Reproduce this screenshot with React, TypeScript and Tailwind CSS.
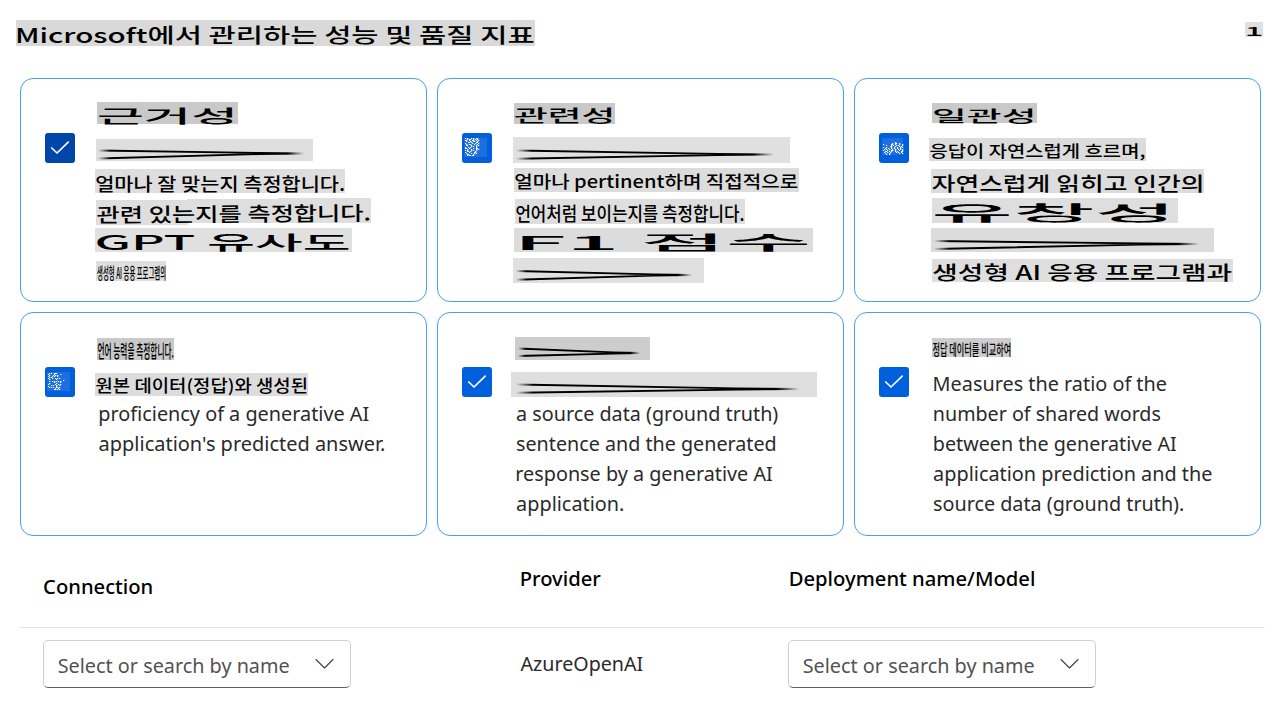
import { useLayoutEffect, useState } from "react";

const KR = '"Noto Sans CJK KR"';
const LATIN = '"Noto Sans"';

type InkProps = {
  text: string;
  x: number;
  w: number;
  /** top and bottom of the drawn glyphs; when only base is given the height is left unscaled */
  top?: number;
  bottom?: number;
  base?: number;
  size?: number;
  weight?: number;
  latin?: boolean;
  rotate?: number;
  className?: string;
};

/** One line of text whose drawn glyphs are scaled to fill a given box. */
function Ink({ text, x, w, top, bottom, base, size = 20, weight, latin, rotate = 0, className = "" }: InkProps) {
  const [transform, setTransform] = useState("none");
  const wt = weight ?? (latin ? 400 : 500);

  useLayoutEffect(() => {
    const ctx = document.createElement("canvas").getContext("2d");
    if (!ctx) return;
    // glyph bounds are rounded to whole pixels, so they are measured enlarged
    const k = 10;
    ctx.font = `${wt} ${size * k}px ${latin ? LATIN : KR}, sans-serif`;
    const m = ctx.measureText(text);
    const left = m.actualBoundingBoxLeft / k;
    const ascent = m.actualBoundingBoxAscent / k;
    const inkW = m.actualBoundingBoxRight / k + left;
    const inkH = ascent + m.actualBoundingBoxDescent / k;
    const fontA = m.fontBoundingBoxAscent / k;
    const fontH = fontA + m.fontBoundingBoxDescent / k;
    const baseline = (size - fontH) / 2 + fontA;
    const sx = w / inkW;
    const sy = top !== undefined && bottom !== undefined ? (bottom - top) / inkH : 1;
    const ty = top !== undefined ? top + 0.8 - (baseline - ascent) * sy : Math.round((base ?? 0) - baseline) + 1;
    const tx = x + (latin ? 0.5 : 0.3) + left * sx;
    setTransform(`translate(${tx}px, ${ty}px) rotate(${rotate}deg) scale(${sx}, ${sy})`);
  }, [text, x, w, top, bottom, base, size, wt, latin, rotate]);

  return (
    <span
      className={`block w-max origin-top-left leading-none whitespace-pre ${
        latin ? "font-['Noto_Sans',sans-serif]" : "font-['Noto_Sans_CJK_KR',sans-serif] text-black"
      } ${className}`}
      style={{ transform, fontSize: size, fontWeight: wt }}
    >
      {text}
    </span>
  );
}

function Mark({ box, ...ink }: InkProps & { box: string }) {
  return (
    <div className="flex h-[30px]">
      <div className={`shrink-0 ${box}`}>
        <Ink {...ink} />
      </div>
    </div>
  );
}

function Stroke({ id, box, w, h, x0, x1, y0, y1, yc }: { id: string; box: string; w: number; h: number; x0: number; x1: number; y0: number; y1: number; yc: number }) {
  const mid = x0 + (x1 - x0) * 0.78;
  return (
    <div className="flex h-[30px]">
      <div className={`shrink-0 ${box}`}>
        <svg width={w} height={h} viewBox={`0 0 ${w} ${h}`} className="block" fill="none">
          <defs>
            <linearGradient id={id} gradientUnits="userSpaceOnUse" x1={x0} y1="0" x2={x1} y2="0">
              <stop offset="0" stopOpacity="0" />
              <stop offset="0.06" stopOpacity="1" />
              <stop offset="0.92" stopOpacity="1" />
              <stop offset="1" stopOpacity="0" />
            </linearGradient>
          </defs>
          <path
            d={`M${x0} ${y0} L${mid} ${yc - 0.6} L${x1} ${yc} M${x0} ${y1} L${mid} ${yc + 0.6} L${x1} ${yc}`}
            stroke={`url(#${id})`}
            strokeWidth="1.9"
          />
        </svg>
      </div>
    </div>
  );
}

function Line({ text, w, x = 5.5 }: { text: string; w: number; x?: number }) {
  return (
    <div className="h-[30px]">
      <Ink latin text={text} x={x} w={w} base={22} className="text-[#2a2a2a]" />
    </div>
  );
}

const NOISE_A = [
  "#.#...#.#..##...",
  "..#.##..#.#.#...",
  "##..#..##..#.#..",
  ".#...#..##..#...",
  "...##.#....##...",
  "#......#..#..#..",
  ".#..##...#..#...",
  ".##...#....#.#..",
  "......#.#..#....",
  "#..#.#.....#....",
  "##..#...#..##...",
  "..#...#....#.#..",
  "#.#...#.#..#....",
  "..##.#....#.....",
  "#...#....##.....",
  ".#....#..#.#....",
  "..##....#.......",
  "..#.##.##.......",
];
const NOISE_B = [
  "............#.........",
  ".........#..##..#.....",
  "#.......##..#...#..#..",
  "...#....#.#..#.#...#..",
  ".......##...#...#.#...",
  "#..#....#..#..#..#.#..",
  "..#..#..#..#..#..#....",
  ".#.#..#..#..#..#.#.#..",
  "#...#...##..#...#..#..",
  "..##..#.#...#.#...##..",
  ".#..#..#.....#.#..#...",
  "..#...#.........#..#..",
  "...#..#...............",
];
const NOISE_C = [
  ".#.#..###.......",
  "#.....#.....#...",
  ".#...#.#.#......",
  "#...#.#..#......",
  ".#.#............",
  "#...#..#.#.#....",
  ".#......#.......",
  "...............#",
  ".#..#.#.#.#.#...",
  "......#.....#...",
  ".#......#.......",
  "#......#..#.#...",
  "...#.#..#..#....",
  "#.......#.......",
  ".#.#.#..##.#....",
  ".......#..#.....",
  "......##.#.#....",
];

function Box({ noise, dark }: { noise?: { rows: string[]; x: number; y: number; rx: number; ry: number; rw: number; rh: number }; dark?: boolean }) {
  return (
    <div className={`mt-[54px] ml-6 size-[30px] shrink-0 rounded-[3px] ${dark ? "bg-[#0046a8]" : "bg-[#005fdb]"}`}>
      <svg width="30" height="30" viewBox="0 0 30 30" fill="none" className="block">
        {noise ? (
          <>
            <rect x={noise.rx} y={noise.ry} width={noise.rw} height={noise.rh} fill="#1d6fe0" />
            {noise.rows.flatMap((r, j) =>
              r.split("").map((c, i) =>
                c === "#" ? <rect key={`${i}-${j}`} x={noise.x + i} y={noise.y + j} width="1.3" height="1" fill="#fff" fillOpacity="0.95" /> : null,
              ),
            )}
          </>
        ) : (
          <path d="M6.7 15 L12 20 L23.2 9.2" stroke="#fff" strokeWidth="1.7" strokeLinecap="round" strokeLinejoin="round" />
        )}
      </svg>
    </div>
  );
}

function Card({ box, title, children }: { box: React.ReactNode; title: React.ReactNode; children: React.ReactNode }) {
  return (
    <section className="flex h-[224px] w-[407px] rounded-[13px] border border-[#479ef5] bg-white">
      {box}
      <div className="ml-[19px] w-[320px] pt-[19px]">
        <div className="h-[37px]">{title}</div>
        {children}
      </div>
    </section>
  );
}

function Select({ textX }: { textX: number }) {
  return (
    <div role="combobox" className="flex h-12 w-[308px] items-start rounded-[5px] border border-[#d1d1d1] border-b-[#616161] bg-white">
      <div className="w-[271px]">
        <Ink latin text="Select or search by name" x={textX} w={230} base={32} className="text-[#525252]" />
      </div>
      <svg width="20" height="12" viewBox="0 0 20 12" fill="none" className="mt-[17px]">
        <path d="M1 1.5 L9.5 10 L18 1.5" stroke="#424242" strokeWidth="1.1" strokeLinecap="round" strokeLinejoin="round" />
      </svg>
    </div>
  );
}

export default function App() {
  return (
    <main className="h-[709px] w-[1288px] bg-white">
      <header className="flex h-[78px] justify-between pr-[25px] pl-4">
        <h1 className="mt-5 h-[26px] w-[519px] bg-[#d9d9d9]">
          <Ink text="Microsoft에서 관리하는 성능 및 품질 지표" x={1.5} w={515.5} top={6.5} bottom={25} />
        </h1>
        <div className="mt-[22px] h-[15px] w-[18px] bg-[#e0e0e0]">
          <Ink text="1" x={2} w={14} top={5} bottom={14} />
        </div>
      </header>

      <div className="ml-5 grid w-[1241px] grid-cols-3 gap-[10px]">
        <Card box={<Box dark />} title={<Mark box="ml-[3px] mt-1 h-[22px] w-[141px] bg-[#c9c9c9]" text="근거성" x={2} w={133} top={5.5} bottom={22} />}>
          <Stroke id="s1" box="ml-[2px] mt-1 h-[22px] w-[217px] bg-[#dedede]" w={217} h={22} x0={2} x1={208} y0={11.5} y1={19.5} yc={14.5} />
          <Mark box="ml-px mt-1 h-6 w-[250px] bg-[#dedede]" text="얼마나 잘 맞는지 측정합니다." x={1} w={247.5} top={6} bottom={23.5} />
          <Mark
            box="ml-[2px] mt-[2px] h-[29px] w-[275px] bg-[#dedede] [clip-path:polygon(0_3px,91px_3px,91px_2px,182px_2px,182px_1px,275px_1px,275px_26px,92px_26px,92px_28px,0_28px)]"
            text="관련 있는지를 측정합니다."
            x={1}
            w={272}
            top={8.5}
            bottom={27}
            rotate={-0.4}
          />
          <Mark box="ml-px mt-[3px] h-6 w-[257px] bg-[#e0e0e0]" text="GPT 유사도" x={2} w={251} top={6} bottom={24} />
          <Mark box="ml-[2px] mt-[6px] h-5 w-[70px] bg-[#dedede]" text="생성형 AI 응용 프로그램의" x={1} w={68} top={5} bottom={19.5} />
        </Card>

        <Card
          box={<Box noise={{ rows: NOISE_A, x: 3, y: 5, rx: 2, ry: 5, rw: 23, rh: 19 }} />}
          title={<Mark box="ml-[3px] mt-[5px] h-[21px] w-[101px] bg-[#c9c9c9]" text="관련성" x={1} w={96} top={5} bottom={20.5} />}
        >
          <Stroke id="s2" box="ml-[2px] mt-[2px] h-[26px] w-[277px] bg-[#e0e0e0]" w={277} h={26} x0={3} x1={261} y0={13.5} y1={21.7} yc={17.5} />
          <Mark box="ml-[3px] mt-[3px] h-6 w-[285px] bg-[#dcdcdc]" text="얼마나 pertinent하며 직접적으로" x={1} w={282} top={5.5} bottom={24} />
          <Mark box="ml-1 mt-1 h-[25px] w-[230px] bg-[#dedede]" text="언어처럼 보이는지를 측정합니다." x={1} w={227} top={6} bottom={24} />
          <Mark box="ml-[3px] mt-[3px] h-6 w-[299px] bg-[#dcdcdc]" text="F1 점수" x={8} w={285} top={6} bottom={23.5} />
          <Stroke id="s3" box="ml-[2px] mt-[3px] h-[25px] w-[191px] bg-[#e0e0e0]" w={191} h={25} x0={3} x1={179} y0={13} y1={21.7} yc={17} />
        </Card>

        <Card
          box={<Box noise={{ rows: NOISE_B, x: 4, y: 9, rx: 3, ry: 5, rw: 21, rh: 17 }} />}
          title={<Mark box="ml-1 mt-[5px] h-5 w-[105px] bg-[#c9c9c9]" text="일관성" x={2} w={98} top={5} bottom={20} />}
        >
          <Mark box="ml-px mt-[3px] h-[23px] w-[217px] bg-[#dcdcdc]" text="응답이 자연스럽게 흐르며," x={1} w={214} top={5.3} bottom={22.2} />
          <Mark box="ml-[3px] mt-1 h-[23.5px] w-[273px] bg-[#dcdcdc]" text="자연스럽게 읽히고 인간의" x={1} w={269} top={5.5} bottom={23.5} />
          <Mark box="ml-1 mt-[3px] h-[25px] w-[246px] bg-[#dedede]" text="유창성" x={3} w={231} top={6.5} bottom={25} />
          <Stroke id="s4" box="ml-[3px] mt-[3px] h-6 w-[283px] bg-[#dcdcdc]" w={283} h={24} x0={3} x1={268} y0={13} y1={21} yc={16} />
          <Mark box="ml-1 mt-1 h-[23px] w-[301px] bg-[#dedede]" text="생성형 AI 응용 프로그램과" x={1} w={298} top={5} bottom={23} />
        </Card>

        <Card
          box={<Box noise={{ rows: NOISE_C, x: 3, y: 6, rx: 2, ry: 5, rw: 23, rh: 19 }} />}
          title={<Mark box="ml-[3px] mt-[6px] h-[22px] w-[77px] bg-[#c9c9c9]" text="언어 능력을 측정합니다." x={0.5} w={75.5} top={5} bottom={21.8} />}
        >
          <Mark box="ml-px mt-1 h-[23px] w-[213px] bg-[#dcdcdc]" text="원본 데이터(정답)와 생성된" x={1} w={210} top={5} bottom={22.5} />
          <Line text="proficiency of a generative AI" w={268.5} />
          <Line text="application's predicted answer." w={284.5} x={5} />
        </Card>

        <Card
          box={<Box />}
          title={<Stroke id="s5" box="ml-1 mt-[5px] h-[23px] w-[135px] bg-[#cdcdcd]" w={135} h={23} x0={3} x1={125} y0={11.5} y1={19} yc={16} />}
        >
          <Stroke id="s6" box="mt-[3px] h-[25px] w-[306px] bg-[#dedede]" w={306} h={25} x0={5} x1={288} y0={12.5} y1={20.7} yc={17} />
          <Line text="a source data (ground truth)" w={260.5} />
          <Line text="sentence and the generated" w={258} />
          <Line text="response by a generative AI" w={255} />
          <Line text="application." w={106} />
        </Card>

        <Card
          box={<Box />}
          title={<Mark box="ml-1 mt-[6px] h-[19px] w-[79px] bg-[#cdcdcd]" text="정답 데이터를 비교하여" x={0.5} w={77.5} top={4.5} bottom={18.5} />}
        >
          <Line text="Measures the ratio of the" x={6} w={231.5} />
          <Line text="number of shared words" x={6} w={225.5} />
          <Line text="between the generative AI" x={6} w={241.5} />
          <Line text="application prediction and the" w={277.5} />
          <Line text="source data (ground truth)." w={249} />
        </Card>
      </div>

      <div className="ml-[19px] w-[1246px]">
        <div className="flex h-[92px] border-b border-[#e6e6e6] pl-6">
          <div className="w-[477px]">
            <Ink latin weight={500} text="Connection" x={0.7} w={107.5} base={58} className="text-black" />
          </div>
          <div className="w-[268px]">
            <Ink latin weight={500} text="Provider" x={1} w={79} base={50} className="text-black" />
          </div>
          <Ink latin weight={500} text="Deployment name/Model" x={2} w={243.3} base={50} className="text-black" />
        </div>
        <div className="flex pt-3 pl-6">
          <div className="w-[477px]">
            <Select textX={14.2} />
          </div>
          <div className="w-[268px]">
            <Ink latin text="AzureOpenAI" x={0} w={122} base={31} className="text-[#2a2a2a]" />
          </div>
          <Select textX={14.2} />
        </div>
      </div>
    </main>
  );
}
